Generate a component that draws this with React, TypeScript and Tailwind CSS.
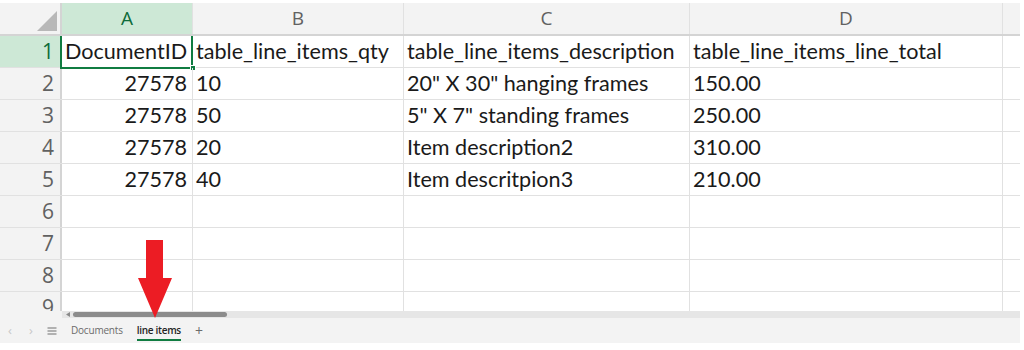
import React from "react"

const cols = [
  { key: "A", w: "w-[131px]" },
  { key: "B", w: "w-[211px]" },
  { key: "C", w: "w-[286px]" },
  { key: "D", w: "w-[313px]" },
]

const rows: (string | null)[][] = [
  ["DocumentID", "table_line_items_qty", "table_line_items_description", "table_line_items_line_total"],
  ["27578", "10", "20\" X 30\" hanging frames", "150.00"],
  ["27578", "50", "5\" X 7\" standing frames", "250.00"],
  ["27578", "20", "Item description2", "310.00"],
  ["27578", "40", "Item descritpion3", "210.00"],
  [null, null, null, null],
  [null, null, null, null],
  [null, null, null, null],
  [null, null, null, null],
]

const cellFont = { fontFamily: "Lato, 'Open Sans', sans-serif" }

function HeaderRow() {
  return (
    <div className="flex h-[33px] bg-[#f3f3f3] border-b-2 border-[#d4d4d4]">
      <div className="w-[62px] shrink-0 border-r-2 border-[#d4d4d4] flex items-end justify-end pb-[3px] pr-[3px]">
        <svg width="20" height="20" viewBox="0 0 20 20">
          <polygon points="20,0 20,20 0,20" fill="#b8b8b8" />
        </svg>
      </div>
      {cols.map((c) => (
        <div
          key={c.key}
          className={`${c.w} shrink-0 border-r border-[#e1e1e1] flex items-center justify-center text-[19px] ${
            c.key === "A" ? "bg-[#cde8d6] text-[#0e6b3a]" : "text-[#616161]"
          }`}
          style={{ fontFamily: "'Open Sans', sans-serif" }}
        >
          {c.key}
        </div>
      ))}
      <div className="flex-1" />
    </div>
  )
}

function DataRow({ idx, vals }: { idx: number; vals: (string | null)[] }) {
  const first = idx === 1
  return (
    <div className="flex h-[32px] border-b border-[#e1e1e1] shrink-0">
      <div
        className={`w-[62px] shrink-0 border-r-2 border-[#d4d4d4] flex items-center justify-end pr-[6px] text-[21px] ${
          first ? "bg-[#cde8d6] text-[#0e6b3a]" : "bg-[#f3f3f3] text-[#616161]"
        }`}
        style={{ fontFamily: "'Open Sans', sans-serif" }}
      >
        {idx}
      </div>
      {cols.map((c, i) => {
        const v = vals[i]
        const right = i === 0 && idx > 1
        return (
          <div
            key={c.key}
            className={`relative ${c.w} shrink-0 border-r border-[#e1e1e1] flex items-center px-[3px] text-[21.6px] text-[#1a1a1a] whitespace-nowrap ${
              right ? "justify-end pr-[5px]" : ""
            }`}
            style={cellFont}
          >
            {v}
            {first && i === 0 && (
              <>
                <div className="absolute -left-[2px] -top-[2px] -right-[1px] -bottom-[2px] border-2 border-[#107c41]" />
                <div className="absolute -right-[4px] -bottom-[4px] w-[6px] h-[6px] bg-[#107c41] border border-white" />
              </>
            )}
          </div>
        )
      })}
      <div className="w-[17px] shrink-0" />
    </div>
  )
}

export default function App() {
  return (
    <div className="relative w-[1024px] h-[350px] bg-white overflow-hidden">
      <div className="w-[1020px] pt-[3px] flex flex-col">
        <HeaderRow />
        <div className="h-[275px] overflow-hidden flex flex-col">
          {rows.map((r, i) => (
            <DataRow key={i} idx={i + 1} vals={r} />
          ))}
        </div>
        <div className="flex h-[7px] bg-[#f3f3f3]">
          <div className="w-[62px] shrink-0" />
          <div className="flex-1 bg-[#e6e6e6] flex items-center">
            <svg width="8" height="7" viewBox="0 0 8 7" className="ml-[2px]">
              <polygon points="6,1 6,6 2,3.5" fill="#8a8a8a" />
            </svg>
            <div className="ml-[1px] w-[154px] h-[5px] rounded-full bg-[#8c8c8c]" />
          </div>
        </div>
        <div
          className="flex items-stretch h-[25px] bg-[#f3f3f3] text-[10px]"
          style={{ fontFamily: "'Open Sans', sans-serif" }}
        >
          <div className="w-[20px] flex items-center justify-center text-[#c8c8c8] text-[13px]">‹</div>
          <div className="w-[22px] flex items-center justify-center text-[#c8c8c8] text-[13px]">›</div>
          <div className="w-[20px] flex items-center justify-center">
            <svg width="10" height="8" viewBox="0 0 10 8">
              <path d="M0.5 1h9M0.5 4h9M0.5 7h9" stroke="#707070" strokeWidth="1.1" />
            </svg>
          </div>
          <div className="ml-[9px] flex items-center text-[#6b6b6b] tracking-[-0.2px]">Documents</div>
          <div className="ml-[14px] flex flex-col justify-center relative text-[#242424] font-semibold tracking-[-0.3px]">
            line items
            <div className="absolute left-0 right-0 bottom-[2px] h-[2px] bg-[#107c41]" />
          </div>
          <div className="ml-[14px] flex items-center text-[#6b6b6b] text-[14px]">+</div>
        </div>
      </div>
      <svg
        className="absolute left-[137px] top-[240px]"
        width="36"
        height="80"
        viewBox="0 0 36 80"
      >
        <polygon points="9,0 26,0 26,38 35,38 18,78 1,38 9,38" fill="#ec1c24" />
      </svg>
    </div>
  )
}
